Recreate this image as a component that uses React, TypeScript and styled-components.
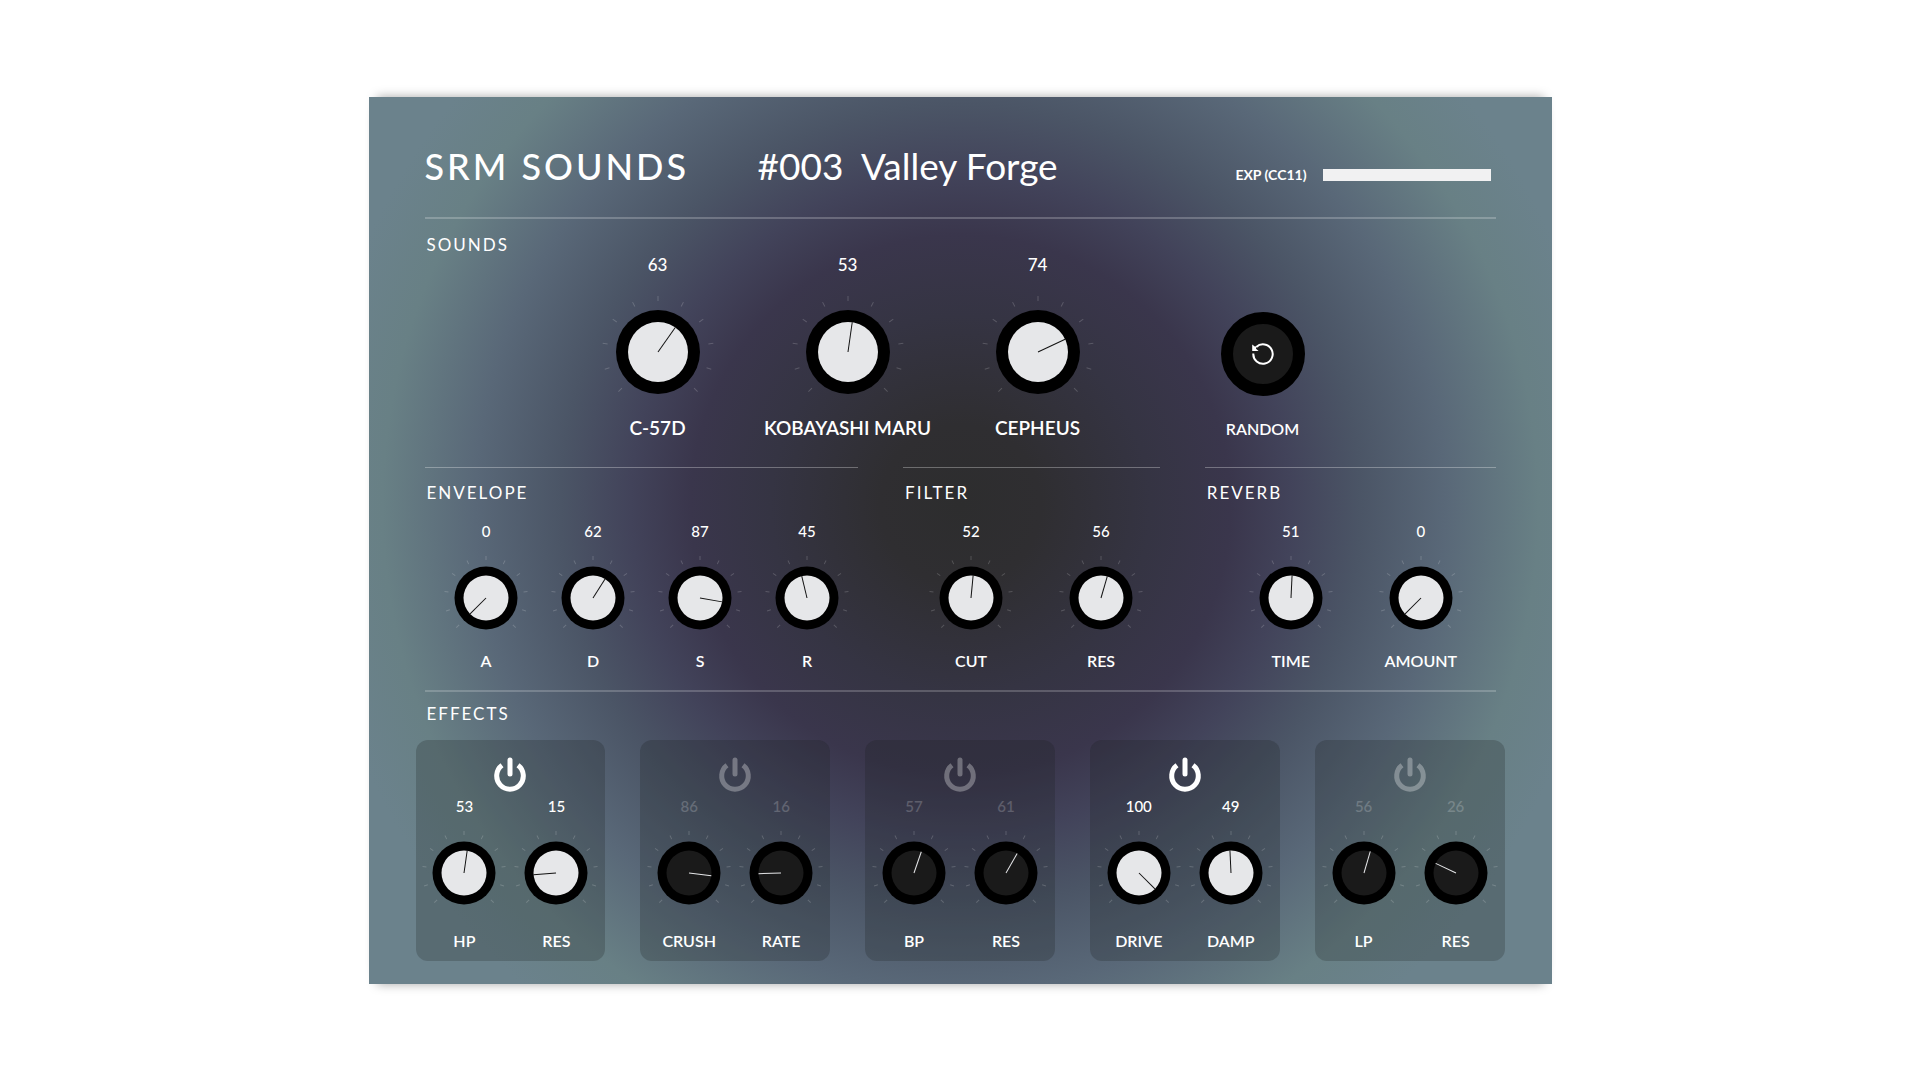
import React from 'react';
import styled, { createGlobalStyle } from 'styled-components';

const Global = createGlobalStyle`
  *, *::before, *::after { box-sizing: border-box; }
  body { margin: 0; background: #fff; }
`;

const Page = styled.main`
  min-height: 100vh;
  display: flex;
  align-items: center;
  justify-content: center;
  font-family: Lato, "Open Sans", sans-serif;
  color: #fff;
`;

const Panel = styled.section`
  width: 100%;
  max-width: 1183px;
  padding: 46px 47px 23px;
  box-shadow: 0 -8px 10px -8px rgba(0, 0, 0, 0.35), 0 8px 10px -8px rgba(0, 0, 0, 0.35);
  background: radial-gradient(
    circle at 50% 46%,
    #2d2d2e 0,
    #2f2e31 80px,
    #353443 190px,
    #3a364c 270px,
    #42435a 330px,
    #4b5566 400px,
    #596878 485px,
    #688085 578px,
    #6b828c 650px
  );
`;

const Header = styled.header`
  display: flex;
  align-items: center;
  margin: 0 9px;
  padding-bottom: 28px;
  border-bottom: 2px solid rgba(255, 255, 255, 0.22);
`;

const Brand = styled.h1`
  margin: 0;
  width: 333px;
  font-size: 36px;
  line-height: 46px;
  font-weight: 500;
  letter-spacing: 3px;
`;

const Preset = styled.h2`
  margin: 0;
  font-size: 37px;
  line-height: 46px;
  font-weight: 400;
  white-space: pre;
`;

const Expression = styled.label`
  margin: 18px 5px 0 auto;
  display: flex;
  align-items: center;
  gap: 16px;
  font-size: 14px;
  line-height: 20px;
  font-weight: 700;
`;

const Meter = styled.progress`
  appearance: none;
  width: 168px;
  height: 12px;
  border: 0;
  background: #f1f1f2;
  &::-webkit-progress-bar { background: transparent; }
  &::-webkit-progress-value { background: #f1f1f2; }
`;

const SectionTitle = styled.h3`
  margin: 0;
  padding-left: 2px;
  font-size: 17px;
  line-height: 20px;
  font-weight: 400;
  letter-spacing: 2px;
`;

const Sounds = styled.section`
  margin: 0 9px;
  padding: 16px 0 28px;
`;

const SoundRow = styled.div`
  display: grid;
  grid-template-columns: repeat(3, 190px) 260px;
  padding-left: 138px;
`;

const RandomCell = styled.div`
  padding-top: 57px;
  display: flex;
  flex-direction: column;
  align-items: center;
  gap: 23px;
  font-size: 16px;
  line-height: 20px;
  font-weight: 600;
`;

const RandomButton = styled.button`
  width: 84px;
  height: 84px;
  padding: 0;
  display: grid;
  place-items: center;
  border: 12px solid #000;
  border-radius: 50%;
  background: #1a1a1a;
  color: #fff;
`;

const Columns = styled.div`
  margin: 0 9px;
  display: grid;
  grid-template-columns: minmax(0, 434fr) minmax(0, 257fr) minmax(0, 291fr);
  column-gap: 45px;
`;

const Group = styled.section`
  padding-top: 15px;
  border-top: 1px solid rgba(255, 255, 255, 0.3);
`;

const GroupRow = styled.div<{ $indent: number; $cell: number }>`
  display: grid;
  grid-auto-flow: column;
  grid-auto-columns: ${(p) => p.$cell}px;
  padding-left: ${(p) => p.$indent}px;
  padding-top: 18px;
`;

const Effects = styled.section`
  margin-top: 19px;
`;

const EffectsHead = styled.div`
  margin: 0 9px;
  padding-top: 12px;
  border-top: 2px solid rgba(255, 255, 255, 0.2);
`;

const Rack = styled.div`
  margin-top: 16px;
  display: grid;
  grid-template-columns: repeat(5, 1fr);
  column-gap: 35px;
`;

const Card = styled.article`
  padding: 16px 0 10px;
  border-radius: 12px;
  background: rgba(28, 29, 31, 0.23);
`;

const Power = styled.button<{ $on: boolean }>`
  display: block;
  margin: 0 auto 2px;
  padding: 0;
  width: 36px;
  height: 38px;
  border: 0;
  background: none;
  color: #fff;
  opacity: ${(p) => (p.$on ? 1 : 0.3)};
`;

const Pair = styled.div`
  display: grid;
  grid-template-columns: 92px 92px;
  justify-content: center;
`;

const KnobCell = styled.div`
  position: relative;
  display: flex;
  flex-direction: column;
  align-items: center;
`;

const Value = styled.output<{ $big: boolean; $on: boolean }>`
  font-size: ${(p) => (p.$big ? 17 : 15)}px;
  line-height: 20px;
  font-weight: 500;
  opacity: ${(p) => (p.$on ? 1 : 0.2)};
`;

const Dial = styled.svg<{ $big: boolean }>`
  display: block;
  width: ${(p) => (p.$big ? 116 : 88)}px;
  height: ${(p) => (p.$big ? 116 : 88)}px;
  margin-top: ${(p) => (p.$big ? 19 : 13)}px;
`;

const Range = styled.input`
  position: absolute;
  inset: 24px 0;
  width: 100%;
  margin: 0;
  opacity: 0;
`;

const Name = styled.label<{ $big: boolean; $gap: number }>`
  margin-top: ${(p) => p.$gap}px;
  font-size: ${(p) => (p.$big ? 19 : 16)}px;
  line-height: 20px;
  font-weight: 600;
  white-space: nowrap;
`;

const ticks = Array.from({ length: 11 }, (_, i) => -135 + i * 27);

interface KnobProps {
  id: string;
  name: string;
  value: number;
  big?: boolean;
  on?: boolean;
  gap?: number;
}

function Knob({ id, name, value, big = false, on = true, gap = 9 }: KnobProps) {
  const size = big ? 116 : 88;
  const c = size / 2;
  const outer = big ? 42 : 31.5;
  const inner = big ? 30 : 22.5;
  const tick = big ? 51 : 38;
  return (
    <KnobCell>
      <Value $big={big} $on={on} htmlFor={id}>{value}</Value>
      <Dial $big={big} viewBox={`0 0 ${size} ${size}`} aria-hidden="true">
        {ticks.map((a) => (
          <line
            key={a}
            x1={c}
            x2={c}
            y1={c - tick}
            y2={c - tick - (big ? 5 : 4)}
            stroke="#fff"
            strokeOpacity="0.18"
            transform={`rotate(${a} ${c} ${c})`}
          />
        ))}
        <circle cx={c} cy={c} r={outer} fill="#000" />
        <circle cx={c} cy={c} r={inner} fill={on ? '#e6e7e9' : '#1a1a1a'} />
        <line
          x1={c}
          y1={c}
          x2={c}
          y2={c - inner}
          stroke={on ? '#111' : '#e6e7e9'}
          transform={`rotate(${-135 + value * 2.7} ${c} ${c})`}
        />
      </Dial>
      <Range id={id} type="range" min="0" max="100" defaultValue={value} disabled={!on} />
      <Name $big={big} $gap={gap} htmlFor={id}>{name}</Name>
    </KnobCell>
  );
}

const sounds = [['C-57D', 63], ['KOBAYASHI MARU', 53], ['CEPHEUS', 74]] as const;

const groups = [
  { title: 'ENVELOPE', indent: 8, cell: 107, knobs: [['A', 0], ['D', 62], ['S', 87], ['R', 45]] },
  { title: 'FILTER', indent: 3, cell: 130, knobs: [['CUT', 52], ['RES', 56]] },
  { title: 'REVERB', indent: 21, cell: 130, knobs: [['TIME', 51], ['AMOUNT', 0]] },
] as const;

const effects = [
  { on: true, knobs: [['HP', 53], ['RES', 15]] },
  { on: false, knobs: [['CRUSH', 86], ['RATE', 16]] },
  { on: false, knobs: [['BP', 57], ['RES', 61]] },
  { on: true, knobs: [['DRIVE', 100], ['DAMP', 49]] },
  { on: false, knobs: [['LP', 56], ['RES', 26]] },
] as const;

export default function App() {
  return (
    <Page>
      <Global />
      <Panel>
        <Header>
          <Brand>SRM SOUNDS</Brand>
          <Preset>{'#003  Valley Forge'}</Preset>
          <Expression>
            EXP (CC11)
            <Meter value={100} max={100} />
          </Expression>
        </Header>

        <Sounds>
          <SectionTitle>SOUNDS</SectionTitle>
          <SoundRow>
            {sounds.map(([name, value]) => (
              <Knob key={name} id={name} name={name} value={value} gap={8} big />
            ))}
            <RandomCell>
              <RandomButton type="button" aria-labelledby="random-label">
                <svg width="24" height="24" viewBox="0 0 24 24" aria-hidden="true">
                  <path d="M2.300 11.500A9.700 9.700 0 1 0 5.300 5" fill="none" stroke="currentColor" strokeWidth="2" />
                  <path d="M1.200 2.600 3.800 4.600 5.600 4.200 5 6.800 7.600 9H1.200Z" fill="currentColor" />
                </svg>
              </RandomButton>
              <span id="random-label">RANDOM</span>
            </RandomCell>
          </SoundRow>
        </Sounds>

        <Columns>
          {groups.map((g) => (
            <Group key={g.title}>
              <SectionTitle>{g.title}</SectionTitle>
              <GroupRow $indent={g.indent} $cell={g.cell}>
                {g.knobs.map(([name, value]) => (
                  <Knob key={name} id={`${g.title}-${name}`} name={name} value={value} />
                ))}
              </GroupRow>
            </Group>
          ))}
        </Columns>

        <Effects>
          <EffectsHead>
            <SectionTitle>EFFECTS</SectionTitle>
          </EffectsHead>
          <Rack>
            {effects.map((e, i) => (
              <Card key={i}>
                <Power type="button" $on={e.on} aria-label="Power" aria-pressed={e.on}>
                  <svg width="36" height="38" viewBox="0 0 36 38" fill="none" stroke="currentColor" strokeWidth="5">
                    <path d="M10 9.300A13.300 13.300 0 1 0 26 9.300" />
                    <path d="M18 4v14" strokeLinecap="round" />
                  </svg>
                </Power>
                <Pair>
                  {e.knobs.map(([name, value]) => (
                    <Knob key={name} id={`fx${i}-${name}`} name={name} value={value} on={e.on} gap={14} />
                  ))}
                </Pair>
              </Card>
            ))}
          </Rack>
        </Effects>
      </Panel>
    </Page>
  );
}
